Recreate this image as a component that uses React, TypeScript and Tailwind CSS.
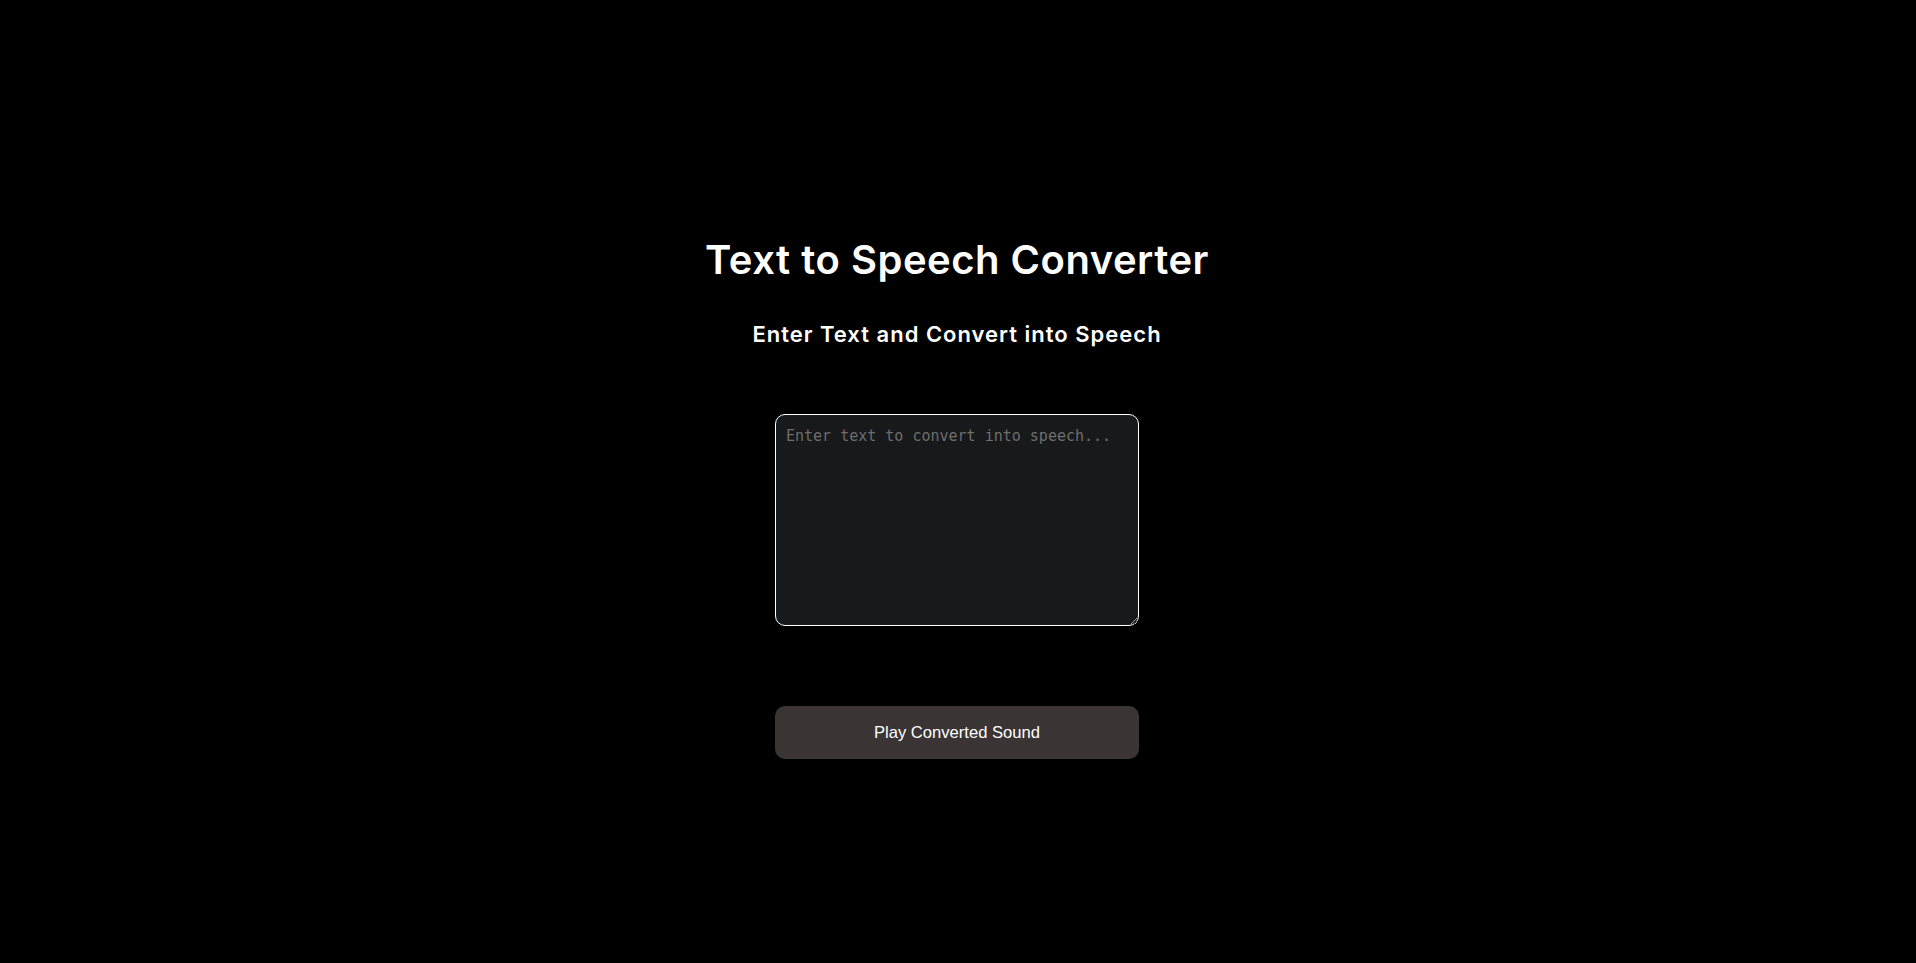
import React, { useState } from 'react';

const App: React.FC = () => {
  const [text, setText] = useState('');

  const handlePlay = () => {
    if (!text.trim() || typeof window === 'undefined' || !window.speechSynthesis) return;
    const utterance = new SpeechSynthesisUtterance(text);
    window.speechSynthesis.speak(utterance);
  };

  return (
    <main className="min-h-screen bg-black flex flex-col items-center pt-[236px] pr-[2px] text-white">
      <h1 className="text-[40px] leading-[48px] font-semibold tracking-[0.5px] font-['Inter',sans-serif]">
        Text to Speech Converter
      </h1>
      <h2 className="mt-[35px] text-[22px] leading-[30px] font-semibold tracking-[1px] font-['Inter',sans-serif]">
        Enter Text and Convert into Speech
      </h2>

      <textarea
        value={text}
        onChange={e => setText(e.target.value)}
        placeholder="Enter text to convert into speech..."
        className="mt-[65px] w-[364px] h-[212px] p-[10px] bg-[#17191a] border border-white rounded-[10px] text-[15px] font-['DejaVu_Sans_Mono',monospace] text-white placeholder-[#6e6e6e] outline-none"
      />

      <button
        onClick={handlePlay}
        className="mt-[80px] w-[364px] h-[53px] pt-[2px] bg-[#3a3435] rounded-[10px] text-[16.6px] text-white font-['Liberation_Sans',Arial,sans-serif]"
      >
        Play Converted Sound
      </button>
    </main>
  );
};

export default App;
